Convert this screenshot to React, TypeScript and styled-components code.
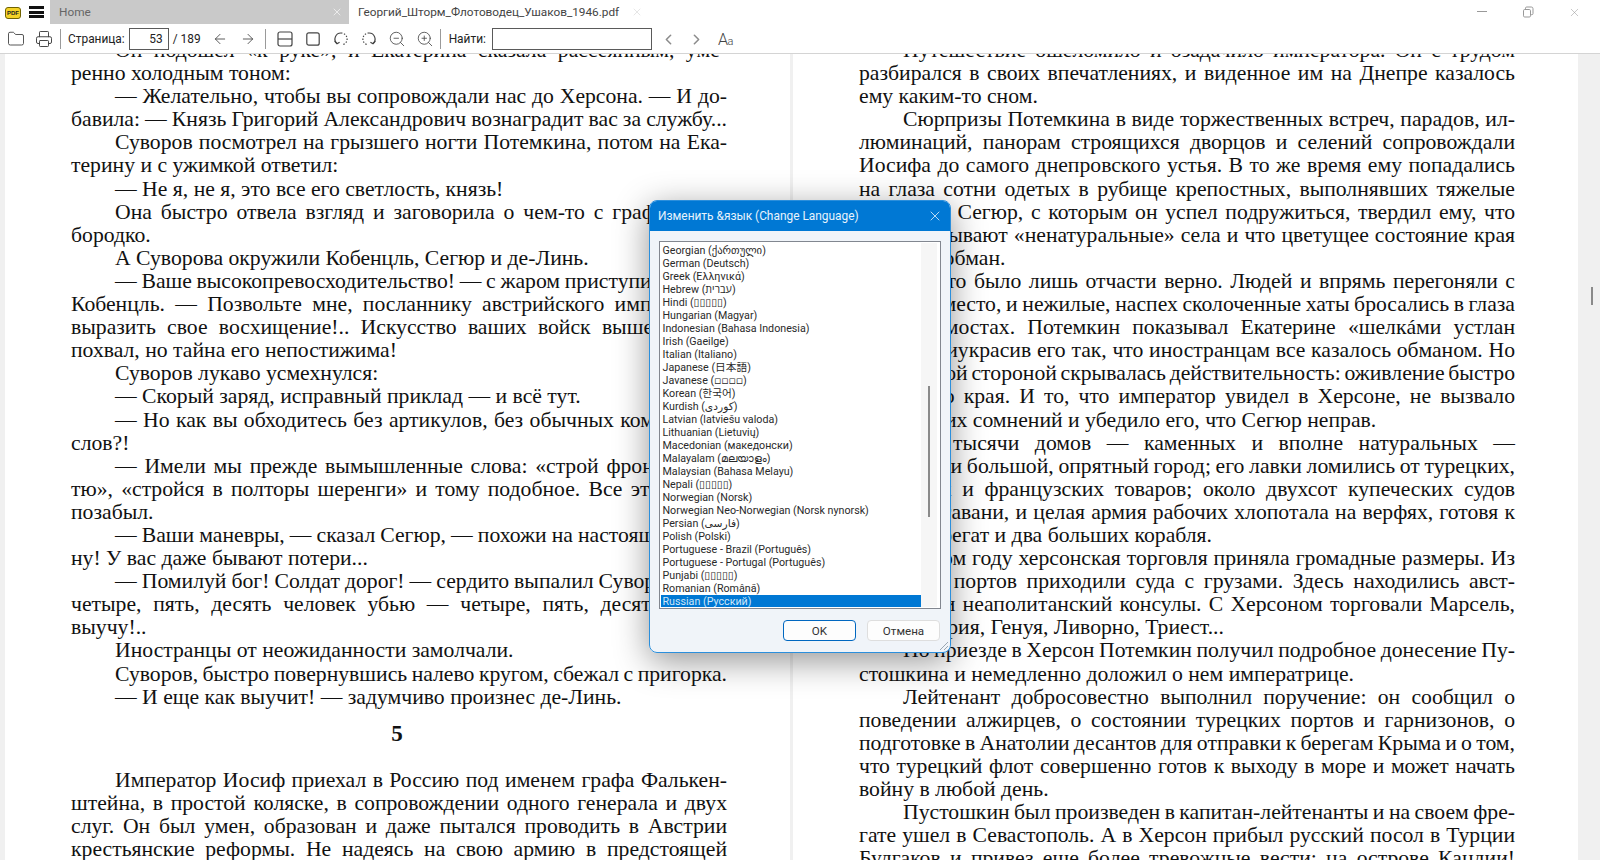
import {
  ArrowLeft,
  ArrowRight,
  ChevronLeft,
  ChevronRight,
  Folder,
  Printer,
  X,
  ZoomIn,
  ZoomOut,
} from 'lucide-react'
import styled, { createGlobalStyle } from 'styled-components'

const UI_FONT = 'Roboto, "Open Sans", "DejaVu Sans", "Noto Sans CJK JP", "Noto Sans CJK KR", sans-serif'

// '>' at the start is a red-line indent, '¶' at the end is a paragraph's last line
const LEFT_PAGE = [
  '>Он подошел «к руке», и Екатерина сказала рассеянным, уме-',
  'ренно холодным тоном:¶',
  '>— Желательно, чтобы вы сопровождали нас до Херсона. — И до-',
  'бавила: — Князь Григорий Александрович вознаградит вас за службу...',
  '>Суворов посмотрел на грызшего ногти Потемкина, потом на Ека-',
  'терину и с ужимкой ответил:¶',
  '>— Не я, не я, это все его светлость, князь!¶',
  '>Она быстро отвела взгляд и заговорила о чем-то с графом Без-',
  'бородко.¶',
  '>А Суворова окружили Кобенцль, Сегюр и де-Линь.¶',
  '>— Ваше высокопревосходительство! — с жаром приступил и граф',
  'Кобенцль. — Позвольте мне, посланнику австрийского императора,',
  'выразить свое восхищение!.. Искусство ваших войск выше всяких',
  'похвал, но тайна его непостижима!¶',
  '>Суворов лукаво усмехнулся:¶',
  '>— Скорый заряд, исправный приклад — и всё тут.¶',
  '>— Но как вы обходитесь без артикулов, без обычных команд, без',
  'слов?!¶',
  '>— Имели мы прежде вымышленные слова: «строй фронт», «ро-',
  'тю», «стройся в полторы шеренги» и тому подобное. Все это давно,',
  'позабыл.¶',
  '>— Ваши маневры, — сказал Сегюр, — похожи на настоящую вой-',
  'ну! У вас даже бывают потери...¶',
  '>— Помилуй бог! Солдат дорог! — сердито выпалил Суворов. Три,',
  'четыре, пять, десять человек убью — четыре, пять, десять тысяч',
  'выучу!..¶',
  '>Иностранцы от неожиданности замолчали.¶',
  '>Суворов, быстро повернувшись налево кругом, сбежал с пригорка.',
  '>— И еще как выучит! — задумчиво произнес де-Линь.¶',
]

const LEFT_PAGE_NEXT = [
  '>Император Иосиф приехал в Россию под именем графа Фалькен-',
  'штейна, в простой коляске, в сопровождении одного генерала и двух',
  'слуг. Он был умен, образован и даже пытался проводить в Австрии',
  'крестьянские реформы. Не надеясь на свою армию в предстоящей',
]

const RIGHT_PAGE = [
  '>Путешествие ошеломило и озадачило императора. Он с трудом',
  'разбирался в своих впечатлениях, и виденное им на Днепре казалось',
  'ему каким-то сном.¶',
  '>Сюрпризы Потемкина в виде торжественных встреч, парадов, ил-',
  'люминаций, панорам строящихся дворцов и селений сопровождали',
  'Иосифа до самого днепровского устья. В то же время ему попадались',
  'на глаза сотни одетых в рубище крепостных, выполнявших тяжелые',
  'и работы. Сегюр, с которым он успел подружиться, твердил ему, что',
  'народ называют «ненатуральные» села и что цветущее состояние края',
  'а всё это обман.¶',
  '>Но это было лишь отчасти верно. Людей и впрямь перегоняли с',
  'места на место, и нежилые, наспех сколоченные хаты бросались в глаза',
  'на всех мостах. Потемкин показывал Екатерине «шелкáми устлан',
  'путь и приукрасив его так, что иностранцам все казалось обманом. Но',
  'за парадной стороной скрывалась действительность: оживление быстро',
  'растущего края. И то, что император увидел в Херсоне, не вызвало',
  'в нем таких сомнений и убедило его, что Сегюр неправ.¶',
  '>Две тысячи домов — каменных и вполне натуральных —',
  'составляли большой, опрятный город; его лавки ломились от турецких,',
  'греческих и французских товаров; около двухсот купеческих судов',
  'стояло в гавани, и целая армия рабочих хлопотала на верфях, готовя к',
  'спуску фрегат и два больших корабля.¶',
  '>В этом году херсонская торговля приняла громадные размеры. Из',
  'турецких портов приходили суда с грузами. Здесь находились авст-',
  'рийский и неаполитанский консулы. С Херсоном торговали Марсель,',
  'Александрия, Генуя, Ливорно, Триест...¶',
  '>По приезде в Херсон Потемкин получил подробное донесение Пу-',
  'стошкина и немедленно доложил о нем императрице.¶',
  '>Лейтенант добросовестно выполнил поручение: он сообщил о',
  'поведении алжирцев, о состоянии турецких портов и гарнизонов, о',
  'подготовке в Анатолии десантов для отправки к берегам Крыма и о том,',
  'что турецкий флот совершенно готов к выходу в море и может начать',
  'войну в любой день.¶',
  '>Пустошкин был произведен в капитан-лейтенанты и на своем фре-',
  'гате ушел в Севастополь. А в Херсон прибыл русский посол в Турции',
  'Булгаков и привез еще более тревожные вести: на острове Кандии!',
]

const LANGUAGES = [
  'Georgian (ქართული)',
  'German (Deutsch)',
  'Greek (Ελληνικά)',
  'Hebrew (עברית)',
  'Hindi (▯▯▯▯▯)',
  'Hungarian (Magyar)',
  'Indonesian (Bahasa Indonesia)',
  'Irish (Gaeilge)',
  'Italian (Italiano)',
  'Japanese (日本語)',
  'Javanese (▫▫▫▫)',
  'Korean (한국어)',
  'Kurdish (كوردی)',
  'Latvian (latviešu valoda)',
  'Lithuanian (Lietuvių)',
  'Macedonian (македонски)',
  'Malayalam (മലയാളം)',
  'Malaysian (Bahasa Melayu)',
  'Nepali (▯▯▯▯▯)',
  'Norwegian (Norsk)',
  'Norwegian Neo-Norwegian (Norsk nynorsk)',
  'Persian (فارسی)',
  'Polish (Polski)',
  'Portuguese - Brazil (Português)',
  'Portuguese - Portugal (Português)',
  'Punjabi (▯▯▯▯▯)',
  'Romanian (Română)',
  'Russian (Русский)',
]

const GlobalStyle = createGlobalStyle`
  html, body {
    margin: 0;
    padding: 0;
    background: #fff;
  }
  * {
    box-sizing: border-box;
  }
`

const Window = styled.div`
  position: relative;
  width: 1600px;
  height: 860px;
  display: flex;
  flex-direction: column;
  overflow: hidden;
  font-family: ${UI_FONT};
  color: #222;
`
const TitleBar = styled.div`
  height: 25px;
  flex: none;
  display: flex;
  align-items: flex-start;
  background: #fff;
`
const Logo = styled.div`
  width: 16px;
  height: 12px;
  margin: 7px 0 0 5px;
  border-radius: 3px;
  background: #f5d327;
  border: 1px solid #6f6200;
  color: #222;
  font: bold 6px/10px "Liberation Sans", sans-serif;
  text-align: center;
`
const Burger = styled.div`
  width: 15px;
  height: 12px;
  margin: 6px 0 0 8px;
  border-top: 3px solid #111;
  border-bottom: 3px solid #111;
  position: relative;
  &::after {
    content: '';
    position: absolute;
    left: 0;
    right: 0;
    top: 1.5px;
    height: 3px;
    background: #111;
  }
`
const Tab = styled.div<{ $active?: boolean }>`
  height: 24px;
  display: flex;
  align-items: center;
  padding: 0 6px 0 9px;
  font-size: 11.8px;
  background: ${({ $active }) => ($active ? '#c9c9c9' : 'transparent')};
  color: ${({ $active }) => ($active ? '#666' : '#444')};
  width: ${({ $active }) => ($active ? '299px' : 'auto')};
  margin-left: ${({ $active }) => ($active ? '6px' : '0')};
`
const TabLabel = styled.span`
  flex: 1;
  white-space: nowrap;
`
const TabClose = styled.span<{ $light?: boolean }>`
  display: flex;
  margin-left: 12px;
  color: ${({ $light }) => ($light ? '#eee' : '#ddd')};
`
const WindowControls = styled.div`
  margin-left: auto;
  display: flex;
  gap: 34px;
  padding: 6px 19px 0 0;
  color: #999;
`
const ToolBar = styled.div`
  height: 29px;
  flex: none;
  display: flex;
  align-items: center;
  background: #fff;
  border-bottom: 1px solid #d4d4d4;
  font-size: 11.9px;
`
const Tool = styled.span<{ $gap: number; $muted?: boolean }>`
  display: flex;
  margin-left: ${({ $gap }) => $gap}px;
  color: ${({ $muted }) => ($muted ? '#8c8c8c' : '#444')};
`
const Separator = styled.span<{ $gap: number }>`
  width: 1px;
  height: 20px;
  margin-left: ${({ $gap }) => $gap}px;
  background: #9a9a9a;
`
const ToolLabel = styled.span<{ $gap: number }>`
  margin-left: ${({ $gap }) => $gap}px;
  white-space: nowrap;
`
const Field = styled.div<{ $width: number; $gap: number }>`
  width: ${({ $width }) => $width}px;
  height: 22px;
  margin-left: ${({ $gap }) => $gap}px;
  border: 1px solid #5a5a5a;
  background: #fff;
  text-align: right;
  padding-right: 5px;
  line-height: 20px;
`
const FontCase = styled.span`
  margin-left: 13px;
  font-size: 16px;
  font-weight: 300;
  color: #444;
  letter-spacing: -0.5px;
  & small {
    font-size: 11px;
  }
`
const Viewer = styled.div`
  flex: 1;
  min-height: 0;
  overflow: hidden;
  display: flex;
  gap: 3px;
  padding-left: 5px;
  background: #f0f0f0;
`
const Page = styled.div`
  width: 785px;
  height: 900px;
  padding: 0 63px 0 66px;
  background: #fff;
  color: #111;
  font: 21.7px/23.1px "Liberation Serif", serif;
`
const TextFlow = styled.div`
  margin-top: -15px;
`
// justified lines start with tight word gaps, the justification opens them up again
const Line = styled.div<{ $indent?: boolean; $last?: boolean }>`
  height: 23.1px;
  white-space: nowrap;
  padding-left: ${({ $indent }) => ($indent ? '44px' : '0')};
  word-spacing: ${({ $last }) => ($last ? '0' : '-3px')};
  text-align: justify;
  text-align-last: ${({ $last }) => ($last ? 'left' : 'justify')};
`
const Chapter = styled.div`
  height: 60px;
  padding: 13px 4px 0 0;
  text-align: center;
  font-weight: bold;
  font-size: 23px;
`
const ScrollThumb = styled.div`
  position: absolute;
  left: 1591px;
  top: 287px;
  width: 2px;
  height: 18px;
  background: #8a8a8a;
`
const Dialog = styled.div`
  position: absolute;
  left: 649px;
  top: 200px;
  width: 302px;
  height: 453px;
  display: flex;
  flex-direction: column;
  border: 1px solid #2b8fdc;
  border-radius: 8px;
  overflow: hidden;
  background: #f0f4f9;
`
const DialogShadow = styled.div`
  position: absolute;
  left: 649px;
  top: 200px;
  width: 302px;
  height: 453px;
  border-radius: 8px;
  box-shadow: 0 8px 34px rgba(0, 0, 0, 0.42);
`
const DialogTitle = styled.div`
  height: 30px;
  flex: none;
  display: flex;
  align-items: center;
  justify-content: space-between;
  padding: 0 7px 0 8px;
  background: #0078d4;
  color: #e8f3fc;
  font-size: 11.9px;
`
const DialogBody = styled.div`
  flex: 1;
  display: flex;
  flex-direction: column;
  padding: 10px 9px 0 9px;
`
const ListBox = styled.div`
  height: 368px;
  flex: none;
  display: flex;
  border: 1px solid #828790;
  background: #fff;
  padding: 1px;
  overflow: hidden;
`
const Rows = styled.div`
  flex: 1;
  padding-top: 1px;
  overflow: hidden;
`
const Row = styled.div<{ $selected?: boolean }>`
  height: 13px;
  padding-left: 1.5px;
  font-size: 10.7px;
  line-height: 13px;
  white-space: nowrap;
  background: ${({ $selected }) => ($selected ? '#0078d4' : 'transparent')};
  color: ${({ $selected }) => ($selected ? '#cfe6f8' : '#2a2a2a')};
`
const ListScroll = styled.div`
  width: 16px;
  flex: none;
  margin-right: 2px;
  background: #f6f6f6;
  display: flex;
  justify-content: center;
  align-items: flex-start;
`
const ListThumb = styled.div`
  width: 2px;
  height: 131px;
  margin-top: 143px;
  background: #8a8a8a;
`
const Buttons = styled.div`
  display: flex;
  justify-content: flex-end;
  gap: 11px;
  margin: 11px 1px 0 0;
`
const Button = styled.div<{ $primary?: boolean }>`
  width: 73px;
  height: 21px;
  border-radius: 4px;
  background: #fdfdfd;
  border: 1px solid ${({ $primary }) => ($primary ? '#0067c0' : '#dedede')};
  font-size: 11.6px;
  line-height: 20px;
  text-align: center;
  color: #333;
`
const Grip = styled.svg`
  position: absolute;
  right: 1px;
  bottom: 1px;
`

const renderLines = (lines: string[]) =>
  lines.map((raw) => {
    const indent = raw.startsWith('>')
    const last = raw.endsWith('¶')
    return (
      <Line key={raw} $indent={indent} $last={last}>
        {raw.replace(/^>/, '').replace(/¶$/, '')}
      </Line>
    )
  })

const RestoreIcon = () => (
  <svg width="12" height="12" viewBox="0 0 12 12" fill="none" stroke="currentColor">
    <rect x="1.5" y="3.5" width="7" height="7.5" rx="1.2" />
    <path d="M3.5 3V2.2a1.2 1.2 0 0 1 1.2-1.2h4.6A1.7 1.7 0 0 1 11 2.7v4.8a1.2 1.2 0 0 1-1.2 1.2H9" />
  </svg>
)

const FitWidthIcon = () => (
  <svg width="16" height="16" viewBox="0 0 16 16" fill="none" stroke="currentColor" strokeWidth="1.2">
    <rect x="1" y="1" width="14" height="14" rx="2" />
    <path d="M1 8h14" />
  </svg>
)

const FitPageIcon = () => (
  <svg width="14" height="14" viewBox="0 0 14 14" fill="none" stroke="currentColor" strokeWidth="1.2">
    <rect x="0.8" y="0.8" width="12.4" height="12.4" rx="2" />
  </svg>
)

const RotateIcon = ({ flip }: { flip?: boolean }) => (
  <svg
    width="16"
    height="16"
    viewBox="0 0 16 16"
    fill="none"
    stroke="currentColor"
    strokeWidth="1.2"
    style={flip ? { transform: 'scaleX(-1)' } : undefined}
  >
    <path d="M4 12.5A6 6 0 0 1 8 2" />
    <path d="M8 2a6 6 0 0 1 5 9.5 6 6 0 0 1-4 2.4" strokeDasharray="1.4 1.6" />
    <path d="M1.6 10.2 4 12.8l2.6-1.6" />
  </svg>
)

export default function App() {
  return (
    <Window>
      <GlobalStyle />
      <TitleBar>
        <Logo>PDF</Logo>
        <Burger />
        <Tab $active>
          <TabLabel>Home</TabLabel>
          <TabClose $light>
            <X size={12} strokeWidth={1.8} />
          </TabClose>
        </Tab>
        <Tab>
          <TabLabel>Георгий_Шторм_Флотоводец_Ушаков_1946.pdf</TabLabel>
          <TabClose>
            <X size={12} strokeWidth={1.5} />
          </TabClose>
        </Tab>
        <WindowControls>
          <svg width="12" height="12" viewBox="0 0 12 12" stroke="currentColor">
            <path d="M1 5.5h10" />
          </svg>
          <RestoreIcon />
          <X size={13} strokeWidth={1} />
        </WindowControls>
      </TitleBar>
      <ToolBar>
        <Tool $gap={7}>
          <Folder size={18} strokeWidth={1.2} />
        </Tool>
        <Tool $gap={10}>
          <Printer size={18} strokeWidth={1.3} />
        </Tool>
        <Separator $gap={7} />
        <ToolLabel $gap={7}>Страница:</ToolLabel>
        <Field $width={40} $gap={4}>53</Field>
        <ToolLabel $gap={4}>/ 189</ToolLabel>
        <Tool $gap={11}>
          <ArrowLeft size={16} strokeWidth={1.3} />
        </Tool>
        <Tool $gap={12}>
          <ArrowRight size={16} strokeWidth={1.3} />
        </Tool>
        <Separator $gap={9} />
        <Tool $gap={11}>
          <FitWidthIcon />
        </Tool>
        <Tool $gap={13}>
          <FitPageIcon />
        </Tool>
        <Tool $gap={13}>
          <RotateIcon />
        </Tool>
        <Tool $gap={12}>
          <RotateIcon flip />
        </Tool>
        <Tool $gap={11}>
          <ZoomOut size={18} strokeWidth={1.1} />
        </Tool>
        <Tool $gap={10}>
          <ZoomIn size={18} strokeWidth={1.1} />
        </Tool>
        <Separator $gap={6} />
        <ToolLabel $gap={8}>Найти:</ToolLabel>
        <Field $width={160} $gap={6} />
        <Tool $gap={8} $muted>
          <ChevronLeft size={17} strokeWidth={2.2} />
        </Tool>
        <Tool $gap={11} $muted>
          <ChevronRight size={17} strokeWidth={2.2} />
        </Tool>
        <FontCase>
          A<small>a</small>
        </FontCase>
      </ToolBar>
      <Viewer>
        <Page>
          <TextFlow>
            {renderLines(LEFT_PAGE)}
            <Chapter>5</Chapter>
            {renderLines(LEFT_PAGE_NEXT)}
          </TextFlow>
        </Page>
        <Page>
          <TextFlow>{renderLines(RIGHT_PAGE)}</TextFlow>
        </Page>
      </Viewer>
      <ScrollThumb />
      <DialogShadow />
      <Dialog>
        <DialogTitle>
          Изменить &amp;язык (Change Language)
          <X size={16} strokeWidth={1.2} />
        </DialogTitle>
        <DialogBody>
          <ListBox>
            <Rows>
              {LANGUAGES.map((name) => (
                <Row key={name} $selected={name.startsWith('Russian')}>
                  {name}
                </Row>
              ))}
            </Rows>
            <ListScroll>
              <ListThumb />
            </ListScroll>
          </ListBox>
          <Buttons>
            <Button $primary>OK</Button>
            <Button>Отмена</Button>
          </Buttons>
        </DialogBody>
        <Grip width="12" height="12" viewBox="0 0 12 12" stroke="#9aa7b3" strokeWidth="1">
          <path d="M11 3 3 11M11 7l-4 4" />
        </Grip>
      </Dialog>
    </Window>
  )
}
